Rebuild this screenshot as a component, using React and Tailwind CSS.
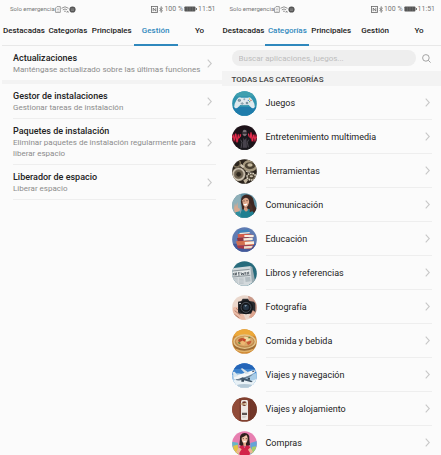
import React from 'react';

const TABS = ['Destacadas', 'Categorías', 'Principales', 'Gestión', 'Yo'];

const TASKS = [
  { title: 'Gestor de instalaciones', text: 'Gestionar tareas de instalación' },
  { title: 'Paquetes de instalación', text: 'Eliminar paquetes de instalación regularmente para liberar espacio' },
  { title: 'Liberador de espacio', text: 'Liberar espacio' },
];

const Avatar = ({ id, bg, children }) => (
  <svg viewBox="0 0 75 75" className="size-[25px] shrink-0" aria-hidden="true">
    <clipPath id={id}>
      <circle cx="37.5" cy="37.5" r="37" />
    </clipPath>
    <g clipPath={`url(#${id})`}>
      <rect width="75" height="75" fill={bg} />
      {children}
    </g>
  </svg>
);

const GamesIcon = () => (
  <Avatar id="games" bg="#2f93ae">
    <rect y="48" width="75" height="27" fill="#1f7cab" />
    <rect width="75" height="16" fill="#3f9fae" />
    <path d="M19 20q5-3 9 0h19q5-3 9 0 5 4 11 18 3 10-1 13-5 3-10-3l-6-6H25l-6 6q-5 6-10 3-4-3-1-13 6-14 11-18z" fill="#dfe9ee" />
    <path d="M24 41h27l-5 2H29z" fill="#9dbac8" />
    <circle cx="22" cy="28" r="4.5" fill="#6c8794" />
    <circle cx="22" cy="27" r="2.5" fill="#9fb3bd" />
    <circle cx="45" cy="36" r="4" fill="#7893a0" />
    <path d="M29 33h3v3h3v3h-3v3h-3v-3h-3v-3h3z" fill="#8ca3af" />
    <circle cx="37" cy="25" r="3" fill="#8fa9b5" />
    <circle cx="53" cy="24" r="2" fill="#d7b13c" />
    <circle cx="57" cy="28" r="2" fill="#c4553f" />
    <circle cx="49" cy="28" r="2" fill="#3f7fc4" />
    <circle cx="53" cy="32" r="2" fill="#4ea35c" />
  </Avatar>
);

const MediaIcon = () => (
  <Avatar id="media" bg="#1d1118">
    <path d="M0 28h75v22H0z" fill="#5e1425" />
    <path d="M0 38l4-6 3 14 4-20 4 26 4-20 4 12 3-16 3 22M46 40l3-14 4 24 4-28 4 26 4-18 4 14 3-10 3 6" fill="none" stroke="#e02b4b" strokeWidth="3.5" />
    <path d="M29 22q0-12 9-12t9 12l2 12 8 8 2 33H18l2-33 7-8z" fill="#19171c" />
    <path d="M32 21q0-7 6-7t6 7v7q-2 6-6 6t-6-6z" fill="#7b6f76" />
    <path d="M31 22h14v4H31z" fill="#2b272d" />
    <path d="M34 38l4 7 5-7 2 30H32z" fill="#47424c" />
    <path d="M26 44l4 8-3 17M50 44l-4 8 3 15" fill="none" stroke="#6b6570" strokeWidth="2" />
  </Avatar>
);

const ToolsIcon = () => (
  <Avatar id="tools" bg="#2b241c">
    <circle cx="14" cy="13" r="11" fill="none" stroke="#7c7059" strokeWidth="5" />
    <ellipse cx="54" cy="20" rx="19" ry="14" fill="#4b4232" stroke="#a3977d" strokeWidth="7" />
    <ellipse cx="54" cy="18" rx="8" ry="5" fill="#c5b99e" />
    <circle cx="20" cy="46" r="21" fill="#85796a" />
    <circle cx="20" cy="46" r="17" fill="none" stroke="#cfc6b3" strokeWidth="4" />
    <circle cx="20" cy="46" r="12" fill="#6b604d" />
    <circle cx="20" cy="46" r="7" fill="#2f281f" />
    <ellipse cx="58" cy="53" rx="13" ry="10" fill="#4d4333" stroke="#dcd4c2" strokeWidth="5" strokeDasharray="5 2" />
    <ellipse cx="58" cy="52" rx="5" ry="3" fill="#c9bfaa" />
    <path d="M34 64l10-6 4 6-8 11z" fill="#bdb09a" />
    <path d="M27 14l10 8-4 6-9-7z" fill="#d2c7b3" />
    <path d="M41 36q6 4 14 3" fill="none" stroke="#e3dbc9" strokeWidth="3" />
  </Avatar>
);

const TalkIcon = () => (
  <Avatar id="talk" bg="#5f8fa0">
    <path d="M0 0h26v75H0z" fill="#8fb0b9" />
    <path d="M28 16q6-13 20-11 15 2 17 19 1 14 9 24l-9 16-30-6q-6-10-6-20-4-12-1-22z" fill="#3d2722" />
    <path d="M31 22q5-10 14-7 8 4 6 16-3 12-11 12-8-2-9-21z" fill="#dda88c" />
    <path d="M34 32q6 2 12-1-1 7-6 7-4 0-6-6z" fill="#fff" />
    <path d="M34 24h4M43 23h4" stroke="#38211b" strokeWidth="2" />
    <path d="M22 75q1-20 15-28l14 1q16 5 19 27z" fill="#1f7f90" />
    <path d="M36 43h9l3 9-6 4-6-5z" fill="#d39a7f" />
    <path d="M52 28q10 8 11 26l-10 4q2-16-4-24z" fill="#4a3029" />
    <path d="M6 47l3-17 3 11 4-14 2 17 6 4-4 10 4 15H12z" fill="#d6a88f" />
    <path d="M10 58l13-3 5 20H12z" fill="#2d8ea0" />
  </Avatar>
);

const EducationIcon = () => (
  <Avatar id="education" bg="#5f7bb2">
    <path d="M0 50h75v25H0z" fill="#43599a" />
    <path d="M17 11l31-4 5 8-34 5z" fill="#3f82ba" />
    <path d="M22 18l31-3v4l-30 3z" fill="#f3ead9" />
    <path d="M17 22l30-1 17 3v7l-46 1z" fill="#d85c47" />
    <path d="M37 24h28v6H37z" fill="#f9eee0" />
    <path d="M15 33l34-2 5 9-37 3z" fill="#8e3541" />
    <path d="M34 34l28-2v7l-27 2z" fill="#f6ecde" />
    <path d="M12 43l40-2 14 4v9l-50 2z" fill="#d4704e" />
    <path d="M38 45l28-2v8l-27 2z" fill="#fbeedd" />
    <path d="M15 56l43-2 7 5-12 8-35-3z" fill="#a83847" />
    <path d="M36 58l27-2-5 8-22 1z" fill="#ecdcca" />
  </Avatar>
);

const BooksIcon = () => (
  <Avatar id="books" bg="#276b7c">
    <path d="M0 22l56-7 8 48-18 12H0z" fill="#d3d9dc" />
    <path d="M55 15l6 3 8 42-9 9z" fill="#9babb1" />
    <path d="M2 33l51-5 1 12-52 5z" fill="#e8ecec" />
    <path d="M4 36v7M9 35v8l4-8v8M18 35h5M18 38h4M18 42h5M27 34l2 8 3-6 3 6 2-8M41 33v8M46 33v8M50 32v8" stroke="#48525a" strokeWidth="2.5" fill="none" />
    <path d="M0 30l53-5M1 48l54-5" stroke="#6c777d" strokeWidth="2" />
    <path d="M2 53l15-1M2 57l15-1M2 61l15-1M2 65l15-1M21 52l14-1M21 56l14-1M21 60l14-1M21 64l14-1M21 68l14-1" stroke="#b4bdc1" strokeWidth="2" />
    <path d="M39 49l15-1 2 13-15 2z" fill="#b3bdc2" />
  </Avatar>
);

const PhotoIcon = () => (
  <Avatar id="photo" bg="#ead7cc">
    <path d="M48 0h27v75H58z" fill="#c8998a" />
    <path d="M3 38q10-7 20 3l12 19 7 15H0z" fill="#e9bba6" />
    <path d="M8 47l17 13M6 57l16 12M12 40l15 12" stroke="#a87463" strokeWidth="2.5" />
    <path d="M18 20l10-2 4-7h16l4 7 14 2 4 6v25q-2 5-6 5H24q-5 0-6-5z" fill="#292a2e" />
    <circle cx="42" cy="37" r="21" fill="#15171b" />
    <circle cx="42" cy="37" r="15" fill="none" stroke="#4b5159" strokeWidth="3" />
    <circle cx="42" cy="37" r="9" fill="#263545" />
    <path d="M37 32q4-4 8-1l-4 4z" fill="#8aa3b6" />
    <path d="M62 46q9 2 7 12l-9 12-10-3 7-10z" fill="#dda58f" />
    <path d="M21 24h6v3h-6z" fill="#b6b8bd" />
  </Avatar>
);

const FoodIcon = () => (
  <Avatar id="food" bg="#d08a35">
    <path d="M0 0h75v20H0z" fill="#eda93a" />
    <ellipse cx="38" cy="44" rx="34" ry="23" fill="#9e6c36" />
    <ellipse cx="38" cy="38" rx="34" ry="22" fill="#e3c48a" />
    <ellipse cx="38" cy="38" rx="30" ry="18" fill="#c08a4c" />
    <ellipse cx="38" cy="37" rx="26" ry="15" fill="#d9a868" />
    <path d="M18 33q8-9 17-5l-5 9-9 3z" fill="#b9512c" />
    <path d="M37 23q13-1 18 9l-10 6-9-7z" fill="#f1dba2" />
    <path d="M26 38q8-5 15 3l-5 8-11-4z" fill="#f0b671" />
    <path d="M43 39l15-4q1 8-10 13z" fill="#c65a35" />
    <path d="M34 28l8 3-3 7-7-3z" fill="#c9452a" />
    <path d="M19 40l6 4M49 27l6-3" stroke="#64813a" strokeWidth="4" />
    <path d="M12 62q25 11 51 0" fill="none" stroke="#e0b26a" strokeWidth="4" />
  </Avatar>
);

const FlightIcon = () => (
  <Avatar id="flight" bg="#3c82cb">
    <path d="M0 0h75v18H0z" fill="#2465b8" />
    <path d="M0 36q15-9 30-3t45-4v46H0z" fill="#a9cde8" />
    <path d="M0 53q20-8 40-2t35-4v28H0z" fill="#e9f2f7" />
    <path d="M14 66q20-6 50 0l-8 9H22z" fill="#b4c8d5" />
    <path d="M5 40l44-14q14-6 21-4 4 3-5 9L26 49q-15 4-20-2z" fill="#f4f7f8" />
    <path d="M10 49q22-3 56-17l-14 11-27 9q-11 2-15-3z" fill="#6f8292" />
    <path d="M41 33L26 17l5-1 22 15z" fill="#d5e0e6" />
    <path d="M31 43l31 12-4 3-36-10z" fill="#42576a" />
    <path d="M6 43L2 27l6-1 11 13z" fill="#dce8ee" />
    <path d="M28 50h8v6h-8zM47 44h7v6h-7z" fill="#354858" />
    <path d="M61 26l6-2" stroke="#263c53" strokeWidth="3" />
  </Avatar>
);

const HotelIcon = () => (
  <Avatar id="hotel" bg="#81402f">
    <path d="M0 0h24v75H0z" fill="#914b38" />
    <path d="M54 0h21v75H54z" fill="#723729" />
    <path d="M24 0v75M54 0v75" stroke="#6d3327" strokeWidth="2" />
    <path d="M27 14q0-5 4-5h13q4 0 4 5v53q0 2-3 2H30q-3 0-3-2z" fill="#eee9e4" />
    <circle cx="37" cy="20" r="7" fill="#6b3529" />
    <path d="M26 21h14" stroke="#c6aa83" strokeWidth="4" />
    <circle cx="41" cy="21" r="4" fill="#d7c5a8" />
    <path d="M30 47h15v7H30z" fill="#5d5552" />
    <path d="M31 58h12M31 61h9" stroke="#c3bbb6" strokeWidth="2" />
  </Avatar>
);

const ShoppingIcon = () => (
  <Avatar id="shopping" bg="#e77fb0">
    <path d="M0 32l18 3 3 40H0z" fill="#66b7c7" />
    <path d="M4 44l13-3 4 34H4z" fill="#e4c345" />
    <path d="M55 36l20-6v45H55z" fill="#65a4d7" />
    <path d="M60 48l12-2v29H57z" fill="#a4cf6b" />
    <path d="M24 24q-2-17 14-18 16 1 14 18l2 18-8 4H29l-7-5z" fill="#30201f" />
    <path d="M29 20q8-3 14-8 5 5 4 13-2 13-9 13-8-1-9-13z" fill="#f2c3aa" />
    <path d="M32 23h4M41 23h4" stroke="#3c2420" strokeWidth="2" />
    <path d="M33 29q5 2 9 0-1 5-5 5-3-1-4-5z" fill="#fff" />
    <path d="M34 36h8v9h-8z" fill="#e5a98b" />
    <path d="M21 49q5-6 12-6l5 8 5-8q8 0 12 6l-2 26H23z" fill="#d32449" />
    <path d="M21 49l-9 14 8 5 9-13zM55 49l8 14-7 5-8-12z" fill="#edb597" />
  </Avatar>
);

const CATEGORIES = [
  { name: 'Juegos', Icon: GamesIcon },
  { name: 'Entretenimiento multimedia', Icon: MediaIcon },
  { name: 'Herramientas', Icon: ToolsIcon },
  { name: 'Comunicación', Icon: TalkIcon },
  { name: 'Educación', Icon: EducationIcon },
  { name: 'Libros y referencias', Icon: BooksIcon },
  { name: 'Fotografía', Icon: PhotoIcon },
  { name: 'Comida y bebida', Icon: FoodIcon },
  { name: 'Viajes y navegación', Icon: FlightIcon },
  { name: 'Viajes y alojamiento', Icon: HotelIcon },
  { name: 'Compras', Icon: ShoppingIcon },
];

const Chevron = () => (
  <svg viewBox="0 0 5 9" className="h-[9px] w-[5px] shrink-0" fill="none" stroke="#c8c8c8" strokeWidth="1.1" aria-hidden="true">
    <path d="M0.7 0.7l3.6 3.8-3.6 3.8" />
  </svg>
);

const StatusBar = () => (
  <div className="flex h-[18px] items-center justify-between pr-[6px] pl-2 text-[#777]">
    <div className="flex items-center text-[6px] leading-[8px]">
      <span>Solo emergencia</span>
      {/* SIM warning */}
      <svg viewBox="0 0 6 7" className="h-[7px] w-[6px]" fill="none" stroke="#777" strokeWidth="0.7">
        <path d="M0.6 2l1.4-1.4h3.3v5.8H0.6zM3 2.3v2M3 5v.6" />
      </svg>
      <svg viewBox="0 0 8 7" className="h-[7px] w-2" fill="none" stroke="#777" strokeWidth="0.8">
        <path d="M0.5 2.3q3.5-3 7 0M1.8 3.9q2.2-1.9 4.4 0M3.1 5.4q.9-.7 1.8 0M5.8 5l1.6 1.6M7.4 5L5.8 6.6" />
      </svg>
      <svg viewBox="0 0 7 7" className="size-[7px]">
        <circle cx="3.5" cy="3.5" r="3.1" fill="#555" />
        <path d="M1.8 3h3.4M2 4.3h3" stroke="#aaa" strokeWidth="0.6" />
      </svg>
    </div>
    <div className="flex items-center gap-px text-[7px] leading-[8px]">
      <svg viewBox="0 0 7 7" className="size-[7px]" fill="none" stroke="#666" strokeWidth="0.8">
        <rect x="0.5" y="0.5" width="6" height="6" />
        <path d="M2.2 5.2V2l2.6 3.2V1.8" />
      </svg>
      <svg viewBox="0 0 4 7" className="h-[7px] w-1" fill="none" stroke="#666" strokeWidth="0.7">
        <path d="M0.5 2l3 3L2 6.4V.6L3.5 2l-3 3" />
      </svg>
      <span>100 %</span>
      <svg viewBox="0 0 13 6" className="h-[6px] w-[13px]">
        <rect x="0.4" y="0.4" width="11" height="5.2" rx="0.8" fill="#555" />
        <path d="M3.3 1v4M6 1v4M8.7 1v4" stroke="#888" strokeWidth="0.4" />
        <rect x="11.8" y="2" width="1" height="2" fill="#555" />
      </svg>
      <span>11:51</span>
    </div>
  </div>
);

const Tabs = ({ active }) => (
  <nav className="grid h-7 grid-cols-5 border-b border-[#e8e8e8]">
    {TABS.map((tab) => (
      <button
        key={tab}
        type="button"
        className={`-mb-px flex items-center justify-center border-b-2 text-[8px] leading-[12px] font-medium whitespace-nowrap ${
          tab === active ? 'border-[#2f88bd] text-[#2f88bd]' : 'border-transparent text-[#222]'
        }`}
      >
        {tab}
      </button>
    ))}
  </nav>
);

const TaskRow = ({ title, text }) => (
  <button type="button" className="flex w-full items-center justify-between pt-[6px] pr-1 pb-[5px] text-left">
    <span className="max-w-[188px]">
      <span className="block text-[9px] leading-[12px] font-medium text-[#222]">{title}</span>
      <span className="block text-[8px] leading-[11px] text-[#8c8c8c]">{text}</span>
    </span>
    <Chevron />
  </button>
);

const ManagePanel = () => (
  <section>
    <StatusBar />
    <Tabs active="Gestión" />
    <div className="pr-[6px] pl-[11px]">
      <TaskRow title="Actualizaciones" text="Manténgase actualizado sobre las últimas funciones" />
    </div>
    <div className="h-1 bg-[#f3f3f3]" />
    <ul className="pr-[6px] pl-[11px]">
      {TASKS.map((task) => (
        <li key={task.title} className="border-b border-[#eeeeee]">
          <TaskRow {...task} />
        </li>
      ))}
    </ul>
  </section>
);

const CategoriesPanel = () => (
  <section>
    <StatusBar />
    <Tabs active="Categorías" />
    <div className="flex items-center justify-between pt-1 pr-[10px] pb-[5px] pl-[10px]">
      <input
        type="search"
        aria-label="Buscar"
        placeholder="Buscar aplicaciones, juegos..."
        className="mr-[6px] h-4 min-w-0 flex-1 rounded-full bg-[#eeeeee] px-[7px] text-[8px] leading-[12px] outline-none placeholder:text-[#bdbdbd]"
      />
      <button type="button" aria-label="Buscar">
        <svg viewBox="0 0 9 9" className="size-[9px]" fill="none" stroke="#999" strokeWidth="0.9">
          <circle cx="3.9" cy="3.9" r="3.3" />
          <path d="M6.3 6.3l2.3 2.3" />
        </svg>
      </button>
    </div>
    <h2 className="bg-[#f3f3f3] pt-[3px] pl-[10px] text-[8px] leading-[12px] font-medium text-[#444]">
      TODAS LAS CATEGORÍAS
    </h2>
    <ul>
      {CATEGORIES.map(({ name, Icon }) => (
        <li key={name}>
          <button type="button" className="flex h-[34px] w-full items-center gap-[9px] pr-[9px] pl-[10px] text-left">
            <Icon />
            <span className="flex h-full flex-1 items-center justify-between border-b border-[#eeeeee] pr-0.5 text-[9px] leading-[12px] text-[#222]">
              {name}
              <Chevron />
            </span>
          </button>
        </li>
      ))}
    </ul>
  </section>
);

export default function App() {
  return (
    <main className="grid h-screen grid-cols-2 overflow-hidden bg-[#fbfbfb] pl-0.5 font-['Roboto',sans-serif]">
      <ManagePanel />
      <CategoriesPanel />
    </main>
  );
}
